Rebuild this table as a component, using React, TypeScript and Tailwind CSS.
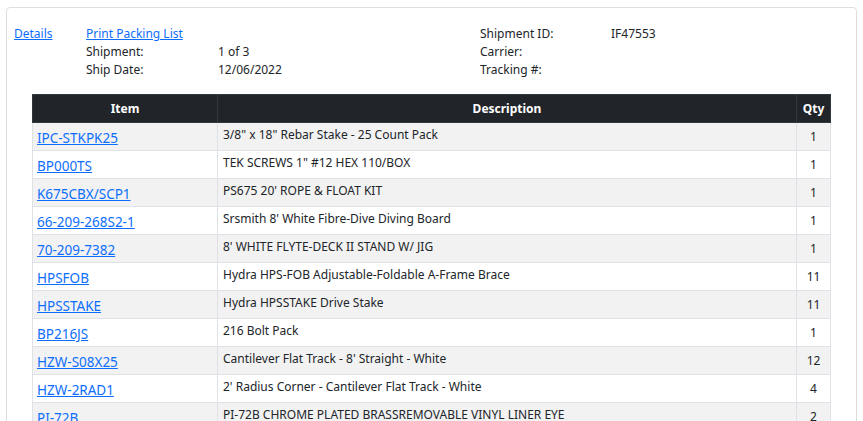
import React from 'react'

const items = [
  { sku: 'IPC-STKPK25', desc: '3/8" x 18" Rebar Stake - 25 Count Pack', qty: 1 },
  { sku: 'BP000TS', desc: 'TEK SCREWS 1" #12 HEX 110/BOX', qty: 1 },
  { sku: 'K675CBX/SCP1', desc: "PS675 20' ROPE & FLOAT KIT", qty: 1 },
  { sku: '66-209-268S2-1', desc: "Srsmith 8' White Fibre-Dive Diving Board", qty: 1 },
  { sku: '70-209-7382', desc: "8' WHITE FLYTE-DECK II STAND W/ JIG", qty: 1 },
  { sku: 'HPSFOB', desc: 'Hydra HPS-FOB Adjustable-Foldable A-Frame Brace', qty: 11 },
  { sku: 'HPSSTAKE', desc: 'Hydra HPSSTAKE Drive Stake', qty: 11 },
  { sku: 'BP216JS', desc: '216 Bolt Pack', qty: 1 },
  { sku: 'HZW-S08X25', desc: "Cantilever Flat Track - 8' Straight - White", qty: 12 },
  { sku: 'HZW-2RAD1', desc: "2' Radius Corner - Cantilever Flat Track - White", qty: 4 },
  { sku: 'PI-72B', desc: 'PI-72B CHROME PLATED BRASSREMOVABLE VINYL LINER EYE', qty: 2 },
]

export default function App() {
  return (
    <div className="h-[421px] overflow-hidden bg-white text-[12px] text-[#212529] font-['Noto_Sans',sans-serif]">
      <div className="mx-[6px] mt-[7px] border border-[#dedede] rounded-[4px] pb-6">
        {/* Shipment info */}
        <div className="grid grid-cols-[72px_132px_262px_131px_1fr] pl-[7px] pt-[17px] leading-[18px]">
          <a href="#" className="text-[#0d6efd] underline">Details</a>
          <a href="#" className="text-[#0d6efd] underline">Print Packing List</a>
          <div></div>
          <div>Shipment ID:</div>
          <div>IF47553</div>

          <div></div>
          <div>Shipment:</div>
          <div>1 of 3</div>
          <div>Carrier:</div>
          <div></div>

          <div></div>
          <div>Ship Date:</div>
          <div>12/06/2022</div>
          <div>Tracking #:</div>
          <div></div>
        </div>

        {/* Items table */}
        <div className="ml-[25px] mr-[25px] mt-[15px]">
          <table className="w-full border-collapse">
            <thead>
              <tr className="h-[28px] bg-[#212529] text-white font-bold">
                <th className="w-[185px] border border-[#32383e] text-center">Item</th>
                <th className="border border-[#32383e] text-center">Description</th>
                <th className="w-[34px] border border-[#32383e] text-center">Qty</th>
              </tr>
            </thead>
            <tbody>
              {items.map((it, i) => (
                <tr key={it.sku} className={`h-[28px] ${i % 2 === 0 ? 'bg-[#f2f2f2]' : 'bg-white'}`}>
                  <td className="border border-[#dee2e6] px-[4px] pt-[3px]">
                    <a href="#" className="text-[13.5px] text-[#0d6efd] underline">{it.sku}</a>
                  </td>
                  <td className="border border-[#dee2e6] px-[5px] pb-[3px]">{it.desc}</td>
                  <td className="border border-[#dee2e6] text-center">{it.qty}</td>
                </tr>
              ))}
            </tbody>
          </table>
        </div>
      </div>
    </div>
  )
}
